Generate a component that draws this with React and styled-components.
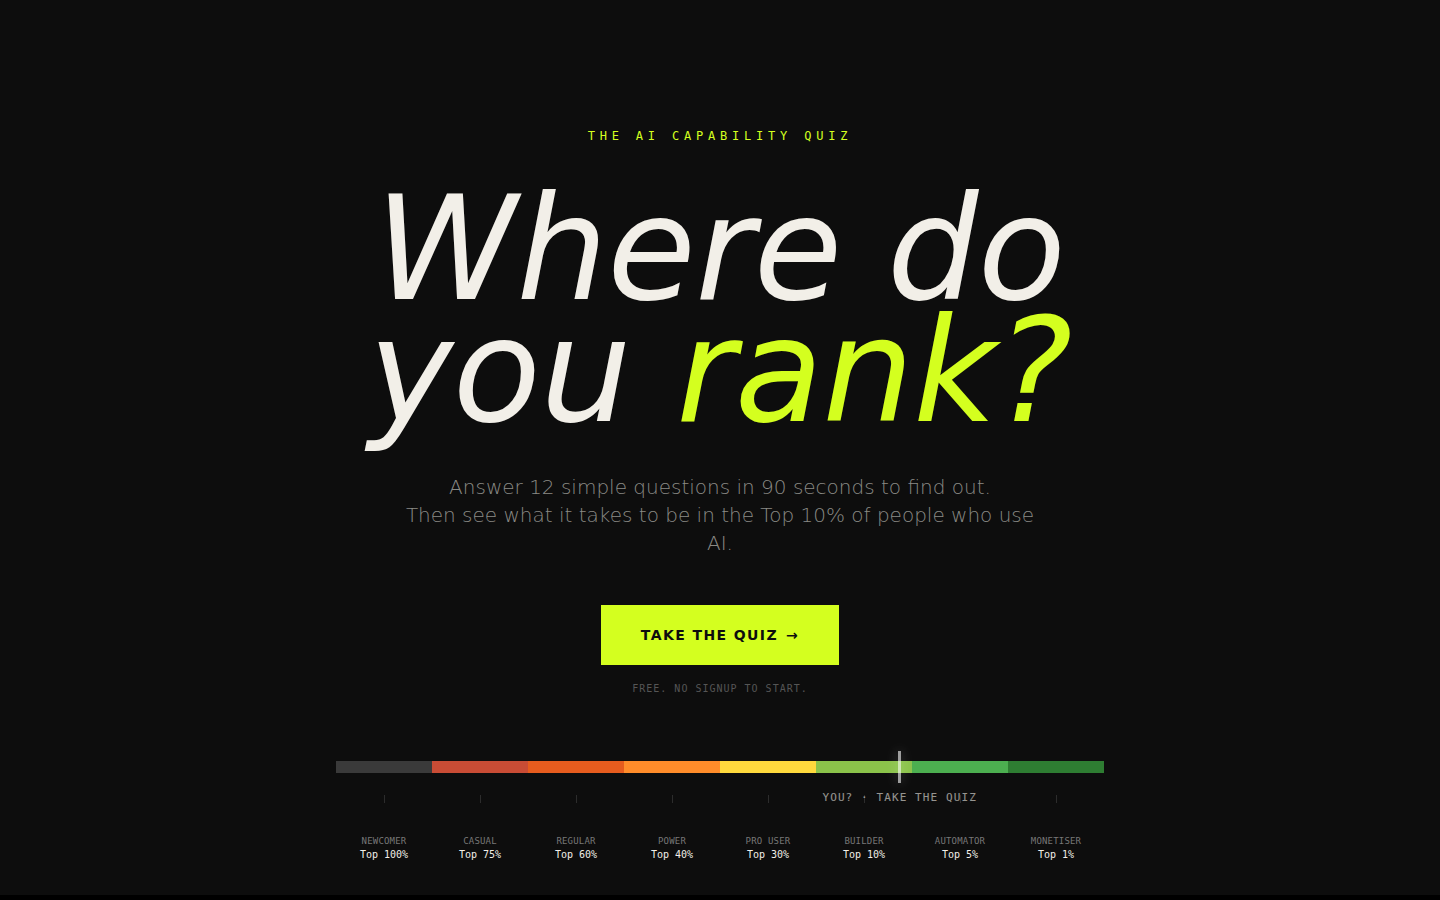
import React from 'react'
import styled, { createGlobalStyle } from 'styled-components'

const tiers = [
  { name: 'NEWCOMER', rank: 'Top 100%', color: '#3a3a3a' },
  { name: 'CASUAL', rank: 'Top 75%', color: '#c94c35' },
  { name: 'REGULAR', rank: 'Top 60%', color: '#e65c1e' },
  { name: 'POWER', rank: 'Top 40%', color: '#ff8c2a' },
  { name: 'PRO USER', rank: 'Top 30%', color: '#ffd93d' },
  { name: 'BUILDER', rank: 'Top 10%', color: '#8bc34a' },
  { name: 'AUTOMATOR', rank: 'Top 5%', color: '#4caf50' },
  { name: 'MONETISER', rank: 'Top 1%', color: '#2e7d32' },
]

const App = () => {
  return (
    <>
      <GlobalStyle />
      <Page>
        <Hero>
          <Eyebrow>THE AI CAPABILITY QUIZ</Eyebrow>
          <Title>
            Where do
            <br />
            you <Accent>rank?</Accent>
          </Title>
          <Lead>
            Answer 12 simple questions in 90 seconds to find out.
            <br />
            Then see what it takes to be in the Top 10% of people who use AI.
          </Lead>
          <Button type="button">
            TAKE THE QUIZ <span>→</span>
          </Button>
          <Note>FREE. NO SIGNUP TO START.</Note>
          <Scale>
            <Bar>
              {tiers.map((tier) => (
                <Segment key={tier.name} $color={tier.color} />
              ))}
              <Marker>
                <MarkerLabel>YOU? · TAKE THE QUIZ</MarkerLabel>
              </Marker>
            </Bar>
            <Tiers>
              {tiers.map((tier) => (
                <Tier key={tier.name}>
                  <TierName>{tier.name}</TierName>
                  <TierRank>{tier.rank}</TierRank>
                </Tier>
              ))}
            </Tiers>
          </Scale>
        </Hero>
      </Page>
    </>
  )
}

const GlobalStyle = createGlobalStyle`
  * {
    box-sizing: border-box;
    margin: 0;
    padding: 0;
  }
  body {
    background: #000;
    color: #f2efe8;
    font-family: "DejaVu Sans", sans-serif;
  }
`

const Page = styled.main`
  background: #0d0d0d;
  padding: 128px 24px 32px;
`

const Hero = styled.section`
  display: flex;
  flex-direction: column;
  align-items: center;
  text-align: center;
`

const Eyebrow = styled.p`
  color: #d4ff1f;
  font-family: "DejaVu Sans Mono", monospace;
  font-size: 12px;
  line-height: 16px;
  letter-spacing: 0.4em;
`

const Title = styled.h1`
  margin-top: 44px;
  font-size: 144px;
  line-height: 0.85;
  font-weight: 400;
  font-style: italic;
  letter-spacing: -0.004em;
`

const Accent = styled.em`
  color: #d4ff1f;
`

const Lead = styled.p`
  max-width: 640px;
  margin-top: 40px;
  color: #8a8a85;
  font-size: 20px;
  line-height: 28px;
  font-weight: 300;
`

const Button = styled.button`
  display: inline-flex;
  align-items: center;
  gap: 8px;
  margin-top: 48px;
  padding: 20px 40px;
  border: 0;
  background: #d4ff1f;
  color: #0d0d0d;
  font-family: inherit;
  font-size: 14px;
  line-height: 20px;
  font-weight: 700;
  letter-spacing: 0.1em;
  cursor: pointer;
`

const Note = styled.p`
  margin-top: 16px;
  color: #555;
  font-family: "DejaVu Sans Mono", monospace;
  font-size: 10px;
  line-height: 16px;
  letter-spacing: 0.1em;
`

const Scale = styled.div`
  width: 100%;
  max-width: 768px;
  margin-top: 64px;
  font-family: "DejaVu Sans Mono", monospace;
`

const Bar = styled.div`
  position: relative;
  display: flex;
  height: 12px;
`

const Segment = styled.div`
  flex: 1;
  background: ${({ $color }) => $color};
`

const Marker = styled.div`
  position: absolute;
  top: -10px;
  bottom: -10px;
  left: 73.2%;
  width: 3px;
  background: #fff;
  box-shadow: 0 0 12px rgb(255 255 255 / 50%);
  opacity: 0.6;
`

const MarkerLabel = styled.span`
  position: absolute;
  top: 100%;
  left: 50%;
  padding-top: 8px;
  transform: translateX(-50%);
  color: #f2efe8;
  font-size: 11px;
  line-height: 14px;
  letter-spacing: 0.1em;
  white-space: nowrap;
`

const Tiers = styled.ul`
  display: flex;
  margin-top: 22px;
  list-style: none;
`

const Tier = styled.li`
  flex: 1;
  display: flex;
  flex-direction: column;
  align-items: center;

  &::before {
    content: "";
    width: 1px;
    height: 8px;
    margin-bottom: 32px;
    background: #2c2c2c;
  }
`

const TierName = styled.span`
  color: #777;
  font-size: 9px;
  line-height: 12px;
  letter-spacing: 0.02em;
`

const TierRank = styled.span`
  font-size: 10px;
  line-height: 16px;
`

export default App
